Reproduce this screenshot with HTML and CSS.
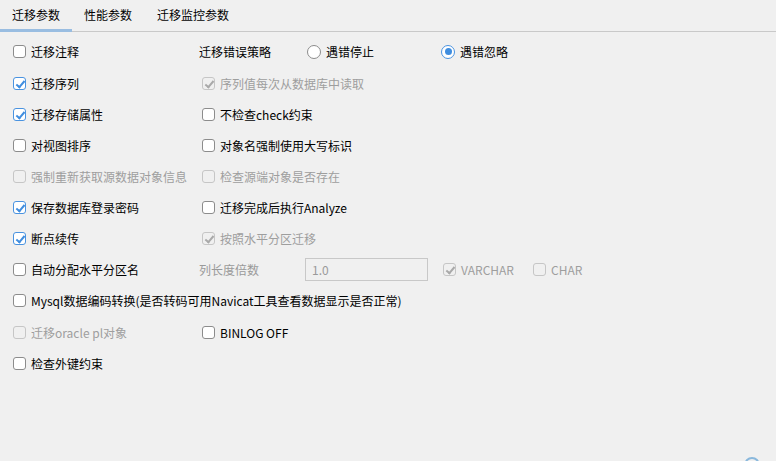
FILE: index.html
```html
<!DOCTYPE html>
<html>
<head>
<meta charset="utf-8">
<link rel="stylesheet" href="styles.css">
</head>
<body>
<div class="tabs">
  <div class="tab active">迁移参数</div>
  <div class="tab">性能参数</div>
  <div class="tab t3">迁移监控参数</div>
</div>
<div class="form">
  <div class="row">
    <div class="c1"><span class="cb"></span><span>迁移注释</span></div>
    <div class="lbl w108">迁移错误策略</div>
    <div class="radio-item w134"><span class="rd"></span><span>遇错停止</span></div>
    <div class="radio-item"><span class="rd on"></span><span>遇错忽略</span></div>
  </div>
  <div class="row tall">
    <div class="c1"><span class="cb on"></span><span>迁移序列</span></div>
    <div class="dis"><span class="cb on"></span><span>序列值每次从数据库中读取</span></div>
  </div>
  <div class="row">
    <div class="c1"><span class="cb on"></span><span>迁移存储属性</span></div>
    <div><span class="cb"></span><span>不检查check约束</span></div>
  </div>
  <div class="row">
    <div class="c1"><span class="cb"></span><span>对视图排序</span></div>
    <div><span class="cb"></span><span>对象名强制使用大写标识</span></div>
  </div>
  <div class="row">
    <div class="c1 dis"><span class="cb"></span><span>强制重新获取源数据对象信息</span></div>
    <div class="dis"><span class="cb"></span><span>检查源端对象是否存在</span></div>
  </div>
  <div class="row">
    <div class="c1"><span class="cb on"></span><span>保存数据库登录密码</span></div>
    <div><span class="cb"></span><span>迁移完成后执行Analyze</span></div>
  </div>
  <div class="row">
    <div class="c1"><span class="cb on"></span><span>断点续传</span></div>
    <div class="dis"><span class="cb on"></span><span>按照水平分区迁移</span></div>
  </div>
  <div class="row">
    <div class="c1"><span class="cb"></span><span>自动分配水平分区名</span></div>
    <div class="lbl w106 grey">列长度倍数</div>
    <div class="input">1.0</div>
    <div class="dis w90"><span class="cb on"></span><span>VARCHAR</span></div>
    <div class="dis"><span class="cb"></span><span>CHAR</span></div>
  </div>
  <div class="row">
    <div><span class="cb"></span><span>Mysql数据编码转换(是否转码可用Navicat工具查看数据显示是否正常)</span></div>
  </div>
  <div class="row tall">
    <div class="c1 dis"><span class="cb"></span><span>迁移oracle pl对象</span></div>
    <div><span class="cb"></span><span>BINLOG OFF</span></div>
  </div>
  <div class="row">
    <div class="c1"><span class="cb"></span><span>检查外键约束</span></div>
  </div>
</div>
<div class="corner"></div>
</body>
</html>
```
FILE: styles.css
```css
html, body {
  margin: 0;
  padding: 0;
  background: #f0f0f0;
  width: 776px;
  height: 461px;
  overflow: hidden;
  font-family: "Noto Sans CJK SC", "Noto Sans", sans-serif;
  font-size: 12px;
  color: #000;
}
.tabs {
  display: flex;
  height: 31px;
  border-bottom: 1px solid #c9c9c9;
  box-sizing: content-box;
}
.tab {
  padding: 0 12px;
  line-height: 29px;
  height: 31px;
  box-sizing: border-box;
}
.tab.t3 { padding-left: 13px; }
.tab.active {
  border-bottom: 3px solid #99bde1;
  height: 32px;
  margin-bottom: -1px;
}
.form {
  padding-top: 4px;
  padding-left: 13px;
}
.row {
  display: flex;
  align-items: center;
  height: 31px;
}
.row.tall { height: 32px; padding-top: 1px; box-sizing: border-box; }
.row > div {
  display: flex;
  align-items: center;
  white-space: nowrap;
}
.c1 { width: 189px; }
.lbl { margin-left: -3px; }
.w108 { width: 108px; }
.w106 { width: 106px; }
.w134 { width: 134px; }
.w90 { width: 90px; }
.grey { color: #9a9a9a; }
.cb {
  width: 13px;
  height: 13px;
  box-sizing: border-box;
  border: 1px solid #8c8c8c;
  border-radius: 3px;
  background: #fff;
  margin-right: 5px;
  flex: none;
  position: relative;
}
.cb.on { border-color: #4a93e0; }
.cb.on::after {
  content: "";
  position: absolute;
  left: 3.5px;
  top: 0.5px;
  width: 3px;
  height: 7px;
  border-right: 2px solid #3f8ddf;
  border-bottom: 2px solid #3f8ddf;
  transform: rotate(40deg);
}
.dis { color: #9e9e9e; }
.dis .cb { border-color: #c6c6c6; background: #f0f0f0; }
.dis .cb.on::after { border-color: #a9a9a9; }
.rd {
  width: 14px;
  height: 14px;
  box-sizing: border-box;
  border: 1px solid #8c8c8c;
  border-radius: 50%;
  background: #fff;
  margin-right: 5px;
  flex: none;
  position: relative;
}
.rd.on { border-color: #4a93e0; }
.rd.on::after {
  content: "";
  position: absolute;
  left: 2.5px;
  top: 2.5px;
  width: 7px;
  height: 7px;
  border-radius: 50%;
  background: #3f8ddf;
}
.input {
  width: 123px;
  height: 23px;
  box-sizing: border-box;
  border: 1px solid #c8c8c8;
  padding-left: 6px;
  color: #9a9a9a;
  margin-right: 15px;
}
.corner {
  position: absolute;
  left: 744px;
  top: 457px;
  width: 16px;
  height: 16px;
  box-sizing: border-box;
  border: 2px solid #8ab8dc;
  border-radius: 50%;
}
```
